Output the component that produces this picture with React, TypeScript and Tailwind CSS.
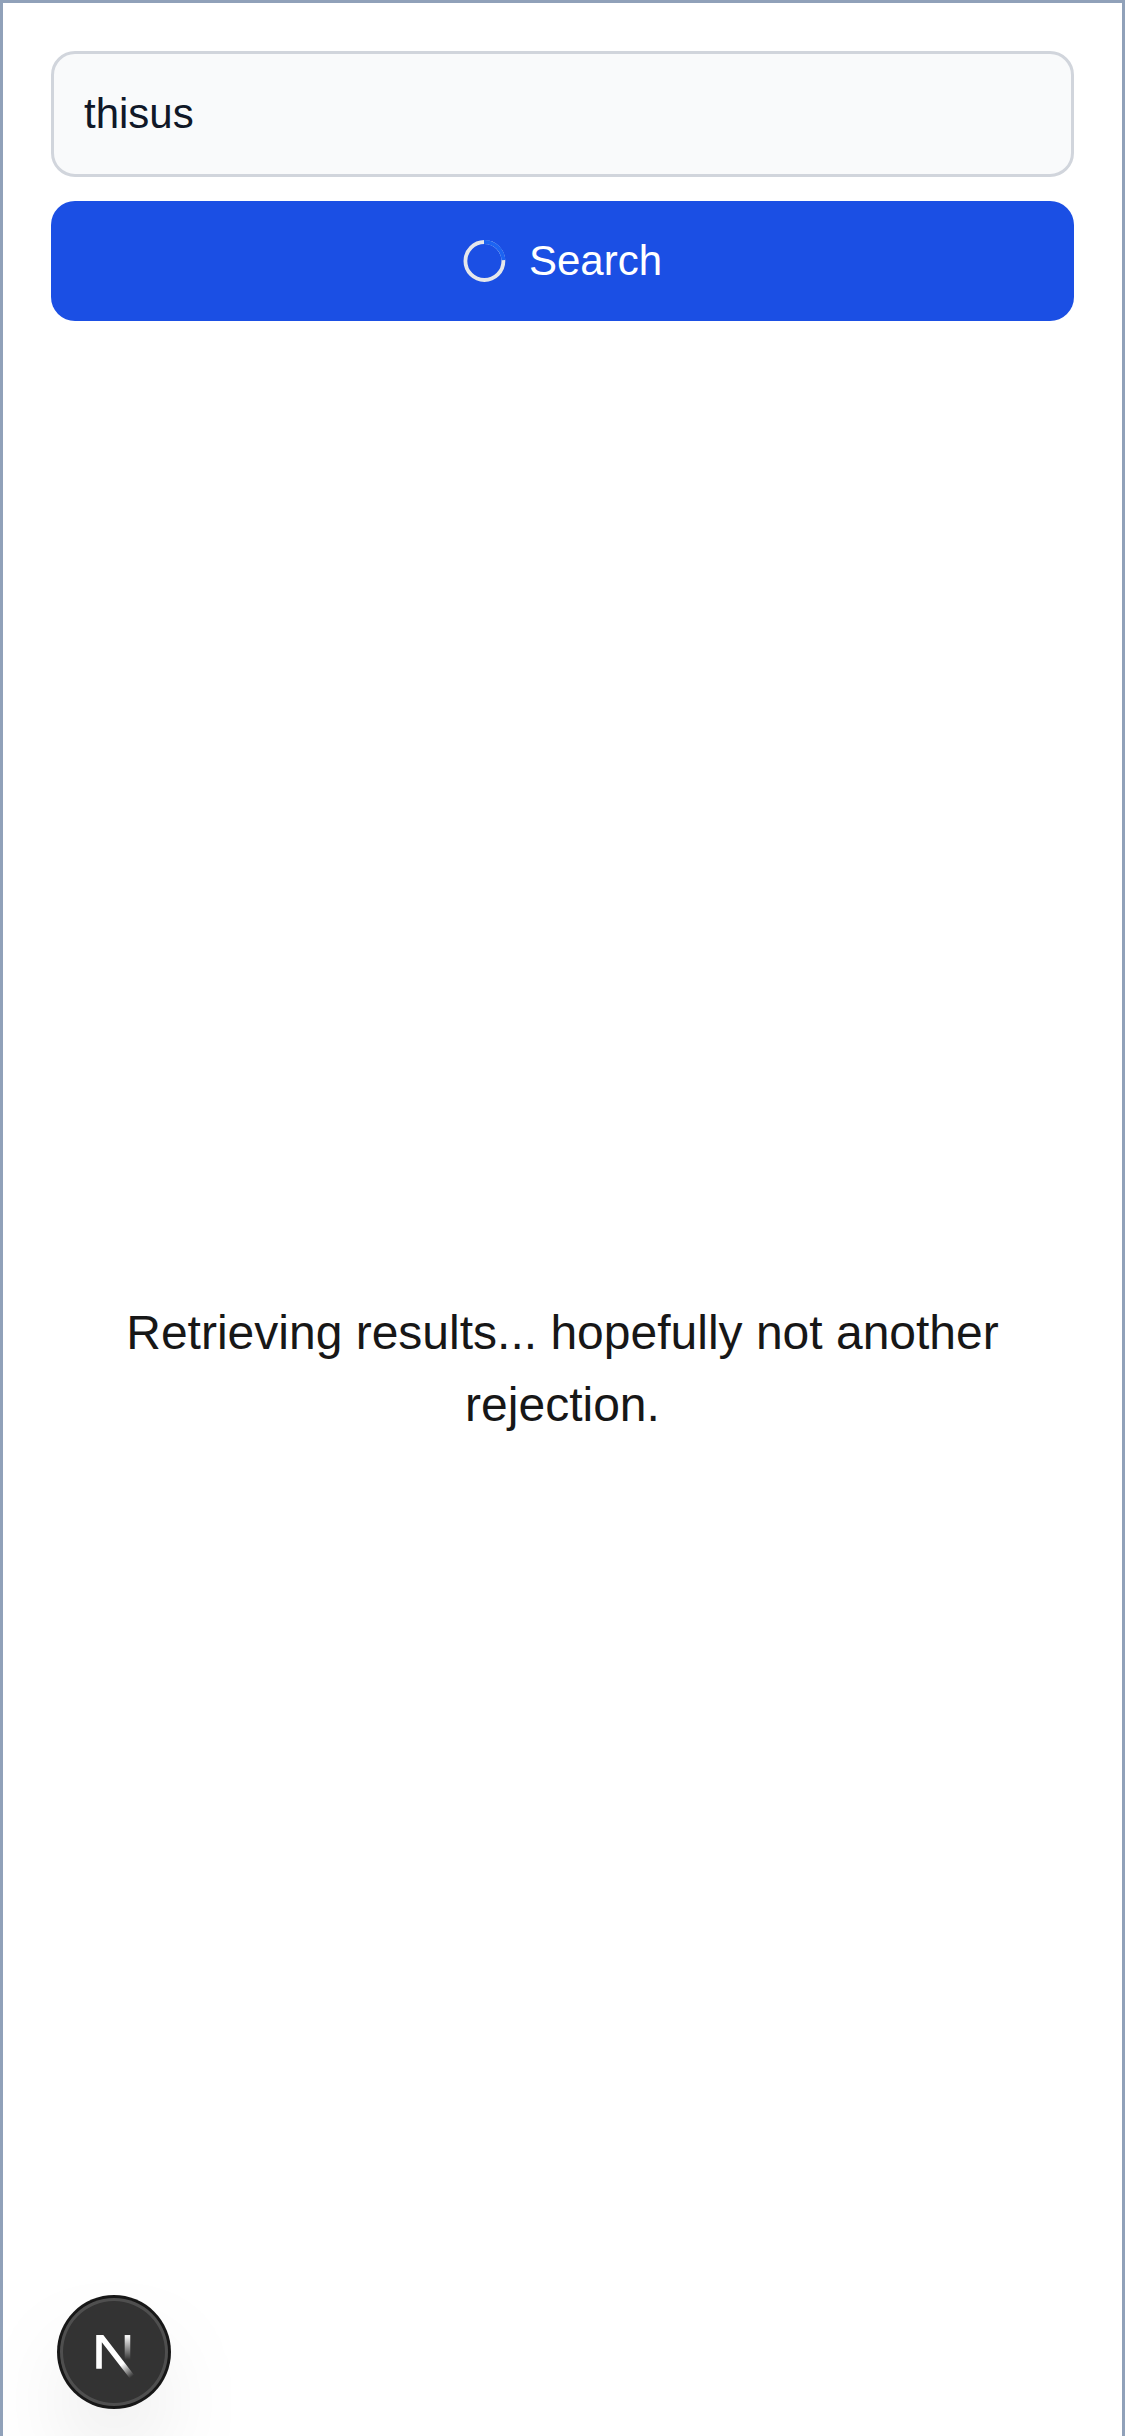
function Spinner() {
  return (
    <svg className="size-[42px] overflow-visible" viewBox="0 0 42 42" fill="none" aria-hidden="true">
      <circle cx="21.4" cy="21" r="19" stroke="#e5e7eb" strokeWidth="3.8" />
      <path d="M21 2A19 19 0 0 1 40.4 20.2" stroke="#1c64f2" strokeWidth="3.8" />
    </svg>
  );
}

function NextMark() {
  return (
    <svg className="size-[54px]" viewBox="0 0 18 18" fill="none" aria-hidden="true">
      <defs>
        <linearGradient id="diagonal" x1="9.956" y1="11.123" x2="15.478" y2="17.967" gradientUnits="userSpaceOnUse">
          <stop stopColor="white" />
          <stop offset="0.604" stopColor="white" stopOpacity="0" />
          <stop offset="1" stopColor="white" stopOpacity="0" />
        </linearGradient>
        <linearGradient id="stem" x1="11.822" y1="1.4" x2="11.791" y2="9.625" gradientUnits="userSpaceOnUse">
          <stop stopColor="white" />
          <stop offset="1" stopColor="white" stopOpacity="0" />
        </linearGradient>
        <clipPath id="mark">
          <rect x="0" y="1.35" width="18" height="16.65" />
        </clipPath>
      </defs>
      <g clipPath="url(#mark)">
        <path d="M13.3 15.2L2.34 1V12.6" stroke="url(#diagonal)" strokeWidth="1.86" />
        <path d="M11.825 1.35V13.1" stroke="url(#stem)" strokeWidth="1.86" />
      </g>
    </svg>
  );
}

export default function App() {
  return (
    <div className="relative flex h-[2436px] w-full flex-col overflow-hidden border-x-[3px] border-t-[3px] border-[#90a1b9] bg-white p-12 font-['Liberation_Sans',Arial,sans-serif] text-[#171717]">
      <form className="flex flex-col gap-6" onSubmit={(e) => e.preventDefault()}>
        <input
          className="h-[126px] w-full rounded-3xl border-[3px] border-[#d1d5dc] bg-[#f9fafb] px-[30px] text-[42px] leading-[60px] text-[#101828] outline-none"
          type="text"
          defaultValue="thisus"
        />
        <button
          className="flex h-[120px] w-full items-center justify-center gap-6 rounded-3xl bg-[#1b4fe4] text-[42px] leading-[60px] text-white"
          type="submit"
        >
          <Spinner />
          Search
        </button>
      </form>

      <main className="flex flex-1 items-center justify-center pt-[29px]">
        <p className="text-center text-5xl leading-[72px]">
          Retrieving results... hopefully not another rejection.
        </p>
      </main>

      <div className="absolute bottom-[6px] left-[81px] size-[60px] rounded-full bg-black/24 blur-[48px]" />
      <button
        className="absolute bottom-[30px] left-[57px] flex size-[108px] items-center justify-center rounded-full bg-[#333333] pt-[12px] pl-[9px] shadow-[0_0_0_3px_#171717,inset_0_0_0_3px_rgba(255,255,255,0.14)]"
        type="button"
        aria-label="Open Next.js Dev Tools"
      >
        <NextMark />
      </button>
    </div>
  );
}
